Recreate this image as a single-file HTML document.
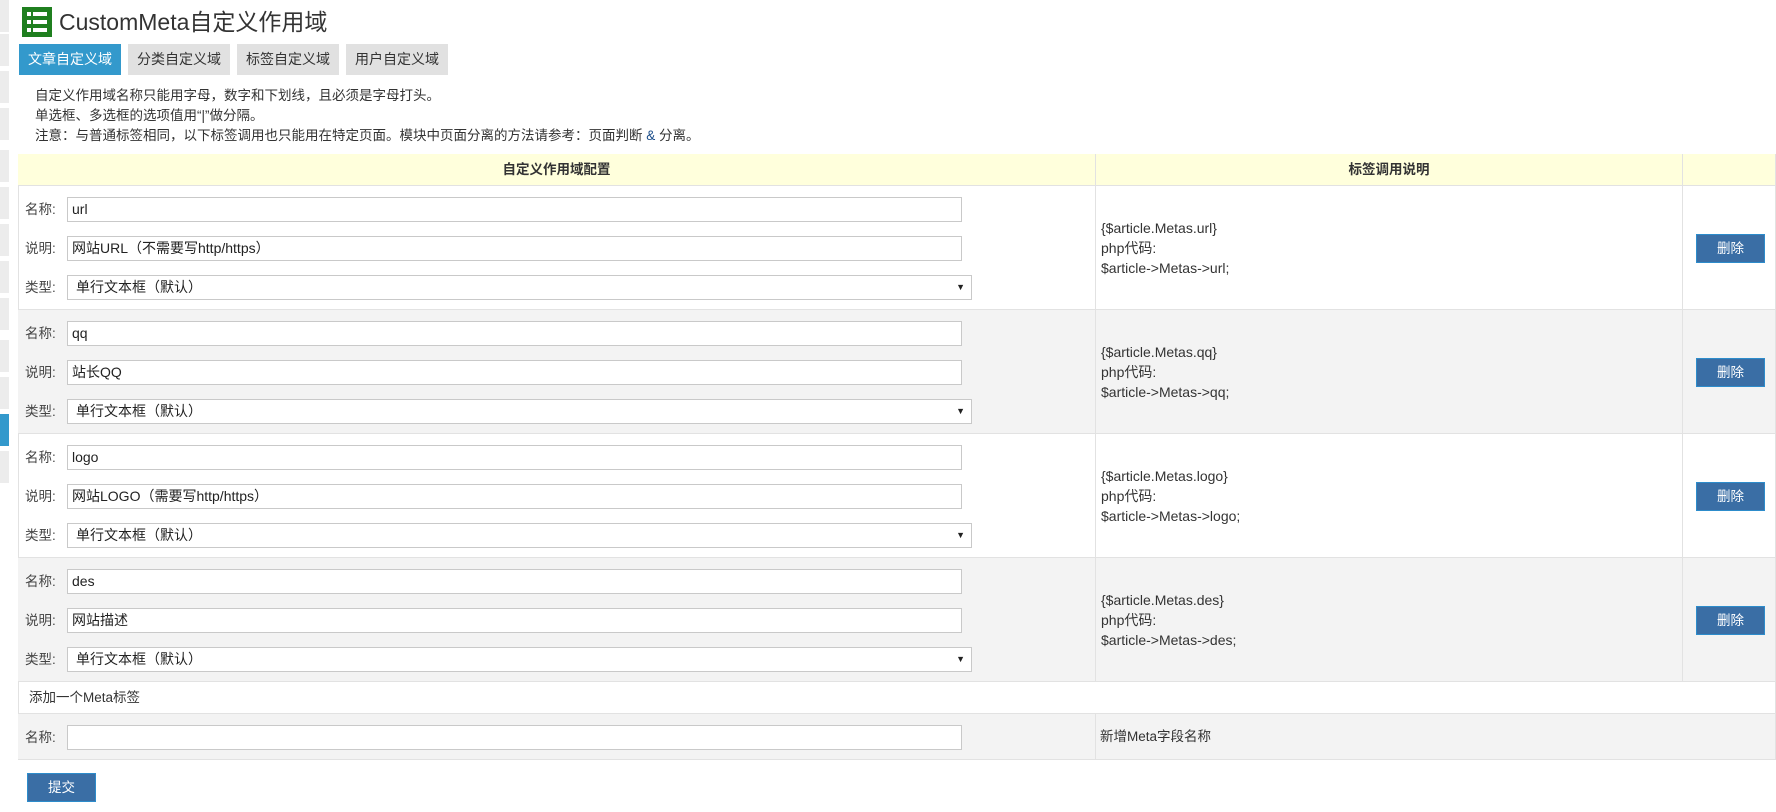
<!DOCTYPE html>
<html><head><meta charset="utf-8"><style>
*{box-sizing:border-box;margin:0;padding:0}
body{width:1776px;height:812px;background:#fff;font-family:"Liberation Sans","Noto Sans CJK SC",sans-serif;font-size:14px;color:#333;position:relative;overflow:hidden}
.a{position:absolute}
.sb{position:absolute;left:0;width:9px;height:32px;background:#ececec}
.tab{position:absolute;top:44px;height:31px;line-height:31px;width:102px;text-align:center;background:#e1e1e1;color:#333;font-size:14px}
.note{position:absolute;left:35px;font-size:13.5px;color:#333}
.cell{position:absolute;border-right:1px solid #e2e2e2;border-bottom:1px solid #e2e2e2}
.lbl{position:absolute;left:25px;font-size:13.5px;color:#444;line-height:25px}
.inp{position:absolute;left:67px;width:895px;height:25px;border:1px solid #c9c9c9;background:#fff;padding-left:4px;line-height:23px;font-size:14px;color:#222}
.sel{width:905px;padding-left:8px}
.sel:after{content:"▼";position:absolute;right:6px;top:0;font-size:9px}
.code{position:absolute;left:1101px;font-size:14px;line-height:20px;color:#333}
.btn{position:absolute;left:1696px;width:69px;height:29px;background:#3a6ea5;border:1px solid #2d8ccb;color:#fff;text-align:center;line-height:27px;font-size:13.5px}
</style></head><body>
<div class="sb" style="top:0"></div><div class="sb" style="top:34px"></div><div class="sb" style="top:71px"></div><div class="sb" style="top:108px"></div><div class="sb" style="top:150px"></div><div class="sb" style="top:187px"></div><div class="sb" style="top:224px"></div><div class="sb" style="top:261px"></div><div class="sb" style="top:298px"></div><div class="sb" style="top:340px"></div><div class="sb" style="top:377px"></div><div class="sb" style="top:414px;background:#3399cc"></div><div class="sb" style="top:451px"></div>

<svg class="a" style="left:22px;top:7px" width="30" height="30" viewBox="0 0 30 30"><rect width="30" height="30" fill="#1f7f1f"/><rect x="5" y="5" width="4" height="4" fill="#fff"/><rect x="11" y="5" width="14" height="4" fill="#fff"/><rect x="5" y="13" width="4" height="4" fill="#fff"/><rect x="11" y="13" width="14" height="4" fill="#fff"/><rect x="5" y="21" width="4" height="4" fill="#fff"/><rect x="11" y="21" width="14" height="4" fill="#fff"/></svg>
<div class="a" style="left:59px;top:7px;font-size:23px;color:#333;line-height:30px">CustomMeta自定义作用域</div>

<div class="tab" style="left:19px;background:#3399cc;color:#fff">文章自定义域</div>
<div class="tab" style="left:128px">分类自定义域</div>
<div class="tab" style="left:237px">标签自定义域</div>
<div class="tab" style="left:346px">用户自定义域</div>

<div class="note" style="top:84px">自定义作用域名称只能用字母，数字和下划线，且必须是字母打头。</div>
<div class="note" style="top:104px">单选框、多选框的选项值用“|”做分隔。</div>
<div class="note" style="top:124px">注意：与普通标签相同，以下标签调用也只能用在特定页面。模块中页面分离的方法请参考：页面判断 <span style="color:#1a4d8a">&amp;</span> 分离。</div>

<div class="a" style="left:18px;top:154px;width:1758px;height:606px;border-left:1px solid #e2e2e2;border-top:1px solid #e2e2e2"></div>
<div class="cell" style="left:18px;top:154px;width:1078px;height:32px;background:#ffffdc;text-align:center;line-height:32px;font-weight:bold;font-size:13.5px">自定义作用域配置</div>
<div class="cell" style="left:1096px;top:154px;width:587px;height:32px;background:#ffffdc;text-align:center;line-height:32px;font-weight:bold;font-size:13.5px">标签调用说明</div>
<div class="cell" style="left:1683px;top:154px;width:93px;height:32px;background:#ffffdc"></div>

<div class="cell" style="left:18px;top:186px;width:1078px;height:124px"></div><div class="cell" style="left:1096px;top:186px;width:587px;height:124px"></div><div class="cell" style="left:1683px;top:186px;width:93px;height:124px"></div>
<div class="cell" style="left:18px;top:310px;width:1078px;height:124px;background:#f3f3f3"></div><div class="cell" style="left:1096px;top:310px;width:587px;height:124px;background:#f3f3f3"></div><div class="cell" style="left:1683px;top:310px;width:93px;height:124px;background:#f3f3f3"></div>
<div class="cell" style="left:18px;top:434px;width:1078px;height:124px"></div><div class="cell" style="left:1096px;top:434px;width:587px;height:124px"></div><div class="cell" style="left:1683px;top:434px;width:93px;height:124px"></div>
<div class="cell" style="left:18px;top:558px;width:1078px;height:124px;background:#f3f3f3"></div><div class="cell" style="left:1096px;top:558px;width:587px;height:124px;background:#f3f3f3"></div><div class="cell" style="left:1683px;top:558px;width:93px;height:124px;background:#f3f3f3"></div>
<div class="cell" style="left:18px;top:682px;width:1758px;height:32px;line-height:32px;padding-left:11px;font-size:13.5px">添加一个Meta标签</div>
<div class="cell" style="left:18px;top:714px;width:1078px;height:46px;background:#f3f3f3"></div><div class="cell" style="left:1096px;top:714px;width:680px;height:46px;background:#f3f3f3;line-height:46px;padding-left:4px;font-size:13.5px">新增Meta字段名称</div>

<div class="lbl" style="top:197px">名称:</div><div class="inp" style="top:197px">url</div>
<div class="lbl" style="top:236px">说明:</div><div class="inp" style="top:236px">网站URL（不需要写http/https）</div>
<div class="lbl" style="top:275px">类型:</div><div class="inp sel" style="top:275px">单行文本框（默认）</div>
<div class="code" style="top:218px">{$article.Metas.url}<br>php代码:<br>$article-&gt;Metas-&gt;url;</div>
<div class="btn" style="top:234px">删除</div>

<div class="lbl" style="top:321px">名称:</div><div class="inp" style="top:321px">qq</div>
<div class="lbl" style="top:360px">说明:</div><div class="inp" style="top:360px">站长QQ</div>
<div class="lbl" style="top:399px">类型:</div><div class="inp sel" style="top:399px">单行文本框（默认）</div>
<div class="code" style="top:342px">{$article.Metas.qq}<br>php代码:<br>$article-&gt;Metas-&gt;qq;</div>
<div class="btn" style="top:358px">删除</div>

<div class="lbl" style="top:445px">名称:</div><div class="inp" style="top:445px">logo</div>
<div class="lbl" style="top:484px">说明:</div><div class="inp" style="top:484px">网站LOGO（需要写http/https）</div>
<div class="lbl" style="top:523px">类型:</div><div class="inp sel" style="top:523px">单行文本框（默认）</div>
<div class="code" style="top:466px">{$article.Metas.logo}<br>php代码:<br>$article-&gt;Metas-&gt;logo;</div>
<div class="btn" style="top:482px">删除</div>

<div class="lbl" style="top:569px">名称:</div><div class="inp" style="top:569px">des</div>
<div class="lbl" style="top:608px">说明:</div><div class="inp" style="top:608px">网站描述</div>
<div class="lbl" style="top:647px">类型:</div><div class="inp sel" style="top:647px">单行文本框（默认）</div>
<div class="code" style="top:590px">{$article.Metas.des}<br>php代码:<br>$article-&gt;Metas-&gt;des;</div>
<div class="btn" style="top:606px">删除</div>

<div class="lbl" style="top:725px">名称:</div><div class="inp" style="top:725px"></div>

<div class="btn" style="left:27px;top:773px;width:69px;height:29px">提交</div>
</body></html>
